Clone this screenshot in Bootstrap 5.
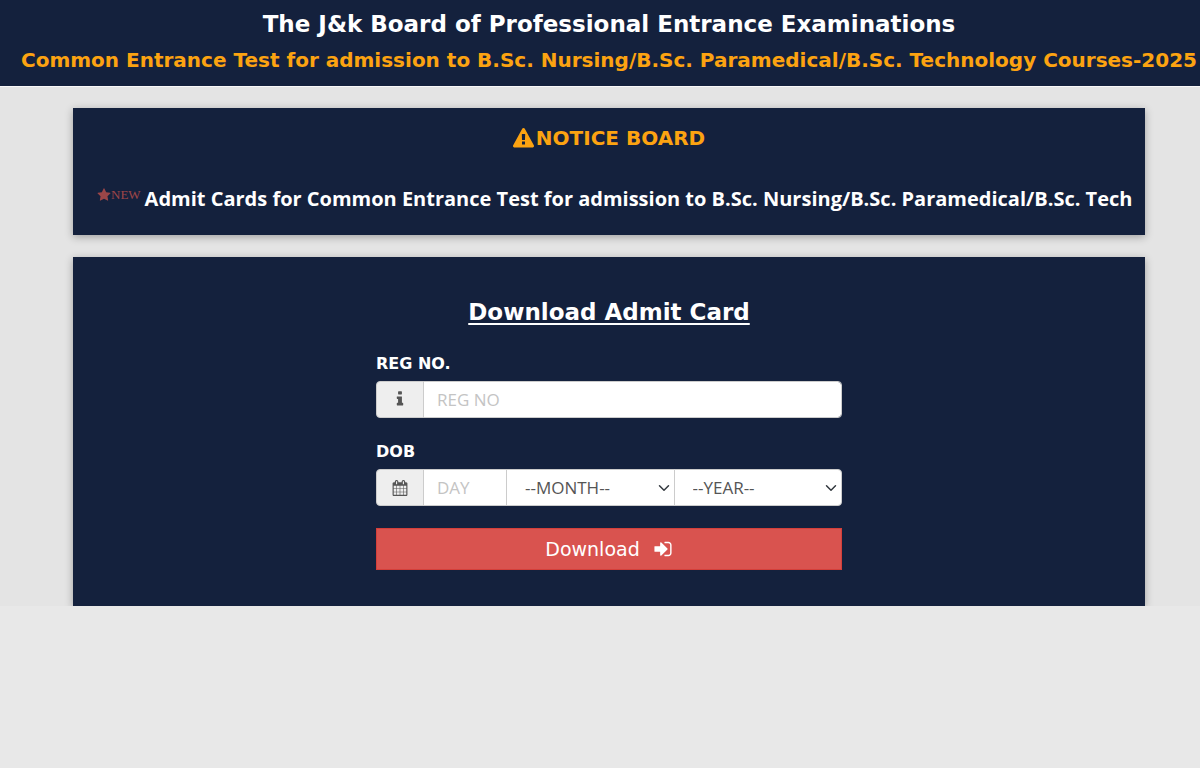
<!DOCTYPE html>
<html lang="en">
<head>
<meta charset="utf-8">
<meta name="viewport" content="width=device-width, initial-scale=1">
<title>Download Admit Card</title>
<link rel="stylesheet" href="https://cdn.jsdelivr.net/npm/bootstrap@5.3.0/dist/css/bootstrap.min.css">
<style>
:root { --navy: #14213d; --amber: #fca311; }
body { background: #e8e8e8; font-family: "DejaVu Sans", Verdana, sans-serif; }
.page { background: #e4e4e4; }
.masthead { background: var(--navy); border-bottom: 1px solid #f8f8f8; padding: 6px 0 8px 18px; line-height: 36px; }
.title-text { font-size: 23px; line-height: inherit; }
.sub-text { font-size: 20px; line-height: inherit; color: var(--amber); }
.content { padding: 21px 55px 0 73px; }
.panel { background: var(--navy); color: #fff; box-shadow: 0 2px 8px rgba(0,0,0,.3); }
.notice { padding: 18px 12px 22px; margin-bottom: 22px; }
.notice-title { font-size: 20px; line-height: 25px; color: var(--amber); margin-bottom: 34px; gap: 2px; }
.ticker { height: 28px; gap: 4px; margin-left: 12px; }
.ticker-text { font: 700 20px/28px "Open Sans", sans-serif; color: #fff; }
.new-tag { font: 13px/20px "Liberation Serif", serif; color: #e45a4f; opacity: .65; }
.download { padding: 40px 12px 36px; }
.form-title { font-size: 23px; line-height: 30px; margin-bottom: 24px; text-decoration: underline; text-decoration-thickness: 2px; text-underline-offset: 3px; }
.entry { max-width: 466px; }
.entry .form-label { font-size: 16px; line-height: 26px; font-weight: 700; margin-bottom: 4px; }
.entry .input-group { height: 37px; margin-bottom: 21px; }
.entry .input-group-text { width: 48px; background: #eee; border-color: #ccc; color: #555; border-radius: 4px; }
.entry .form-control, .entry .form-select { font: 17px/24px "Open Sans", sans-serif; color: #555; border-color: #ccc; border-radius: 4px; padding: 5px 13px; }
.entry .form-control::placeholder { color: #c4c4c4; }
.entry .form-select { padding-left: 18px; background-size: 12px 12px; background-position: right 4px center; }
.day-box { flex: 0 1 84px !important; }
.entry .btn { height: 42px; margin-top: 22px; padding: 0; font-size: 19px; gap: 13px; background: #d9534f; border: 1px solid #d43f3a; color: #fff; }
</style>
</head>
<body>
<div class="page overflow-hidden">
  <header class="masthead text-center text-white">
    <h1 class="title-text fw-bold m-0">The J&amp;k Board of Professional Entrance Examinations</h1>
    <h2 class="sub-text fw-bold m-0 text-nowrap">Common Entrance Test for admission to B.Sc. Nursing/B.Sc. Paramedical/B.Sc. Technology Courses-2025</h2>
  </header>
  <main class="content">
    <section class="panel notice">
      <h3 class="notice-title fw-bold d-flex justify-content-center align-items-center">
        <svg width="21" height="21" viewBox="0 0 1792 1792" fill="currentColor" aria-hidden="true"><path d="M1024 1375v-190q0-14-9.5-23.5t-22.5-9.5h-192q-13 0-22.5 9.5t-9.5 23.5v190q0 14 9.5 23.5t22.5 9.5h192q13 0 22.5-9.5t9.5-23.5zm-2-374l18-459q0-12-10-19-13-11-24-11h-220q-11 0-24 11-10 7-10 21l17 457q0 10 10 16.5t24 6.5h185q14 0 23.5-6.5t10.5-16.5zm-14-934l768 1408q35 63-2 126-17 29-46.5 46t-63.5 17h-1536q-34 0-63.5-17t-46.5-46q-37-63-2-126l768-1408q17-31 47-49t65-18 65 18 47 49z"/></svg>
        NOTICE BOARD
      </h3>
      <div class="ticker d-flex overflow-hidden text-nowrap">
        <span class="new-tag d-flex align-items-center align-self-start flex-shrink-0"><svg width="14" height="14" viewBox="0 0 1792 1792" fill="currentColor" aria-hidden="true"><path d="M1728 647q0 22-26 48l-363 354 86 500q1 7 1 20 0 21-10.5 35.5t-30.5 14.5q-19 0-40-12l-449-236-449 236q-22 12-40 12-21 0-31.5-14.5t-10.5-35.5q0-6 2-20l86-500-364-354q-25-27-25-48 0-37 56-46l502-73 225-455q19-41 49-41t49 41l225 455 502 73q56 9 56 46z"/></svg>NEW</span>
        <a class="ticker-text text-decoration-none" href="#">Admit Cards for Common Entrance Test for admission to B.Sc. Nursing/B.Sc. Paramedical/B.Sc. Tech</a>
      </div>
    </section>
    <section class="panel download">
      <h2 class="form-title fw-bold text-center">Download Admit Card</h2>
      <form class="entry mx-auto">
        <label class="form-label d-block" for="reg">REG NO.</label>
        <div class="input-group">
          <span class="input-group-text justify-content-center p-0"><svg width="18" height="18" viewBox="0 0 1792 1792" fill="currentColor" aria-hidden="true"><path d="M1216 1344v128q0 26-19 45t-45 19h-512q-26 0-45-19t-19-45v-128q0-26 19-45t45-19h64v-384h-64q-26 0-45-19t-19-45v-128q0-26 19-45t45-19h384q26 0 45 19t19 45v576h64q26 0 45 19t19 45zm-128-1152v192q0 26-19 45t-45 19h-256q-26 0-45-19t-19-45v-192q0-26 19-45t45-19h256q26 0 45 19t19 45z" transform="translate(0 -100)"/></svg></span>
          <input id="reg" class="form-control" type="text" placeholder="REG NO">
        </div>
        <label class="form-label d-block" for="day">DOB</label>
        <div class="input-group flex-nowrap mb-0">
          <span class="input-group-text justify-content-center p-0"><svg width="16" height="16" viewBox="0 0 1792 1792" fill="currentColor" aria-hidden="true"><path d="M192 1664h288v-288h-288v288zm352 0h320v-288h-320v288zm-352-352h288v-320h-288v320zm352 0h320v-320h-320v320zm-352-384h288v-288h-288v288zm736 736h320v-288h-320v288zm-384-736h320v-288h-320v288zm768 736h288v-288h-288v288zm-384-352h320v-320h-320v320zm-352-864v-288q0-13-9.5-22.5t-22.5-9.5h-64q-13 0-22.5 9.5t-9.5 22.5v288q0 13 9.5 22.5t22.5 9.5h64q13 0 22.5-9.5t9.5-22.5zm736 864h288v-320h-288v320zm-384-384h320v-288h-320v288zm384 0h288v-288h-288v288zm32-480v-288q0-13-9.5-22.5t-22.5-9.5h-64q-13 0-22.5 9.5t-9.5 22.5v288q0 13 9.5 22.5t22.5 9.5h64q13 0 22.5-9.5t9.5-22.5zm384-64v1280q0 52-38 90t-90 38h-1408q-52 0-90-38t-38-90v-1280q0-52 38-90t90-38h128v-96q0-66 47-113t113-47h64q66 0 113 47t47 113v96h384v-96q0-66 47-113t113-47h64q66 0 113 47t47 113v96h128q52 0 90 38t38 90z"/></svg></span>
          <input id="day" class="form-control day-box" type="text" placeholder="DAY">
          <select class="form-select" aria-label="Month"><option>--MONTH--</option></select>
          <select class="form-select" aria-label="Year"><option>--YEAR--</option></select>
        </div>
        <button class="btn w-100 rounded-0 d-flex justify-content-center align-items-center" type="submit">Download
          <svg width="20" height="20" viewBox="0 0 1792 1792" fill="currentColor" aria-hidden="true"><path d="M1312 896q0 26-19 45l-544 544q-19 19-45 19t-45-19-19-45v-288h-448q-26 0-45-19t-19-45v-384q0-26 19-45t45-19h448v-288q0-26 19-45t45-19 45 19l544 544q19 19 19 45zm352-352v704q0 119-84.5 203.5t-203.5 84.5h-320q-13 0-22.5-9.5t-9.5-22.5q0-4-1-20t-.5-26.5 3-23.5 10-19.5 20.5-6.5h320q66 0 113-47t47-113v-704q0-66-47-113t-113-47h-312l-11.5-1-11.5-3-8-5.5-7-9-2-13.5q0-4-1-20t-.5-26.5 3-23.5 10-19.5 20.5-6.5h320q119 0 203.5 84.5t84.5 203.5z"/></svg>
        </button>
      </form>
    </section>
  </main>
</div>
<script src="https://cdn.jsdelivr.net/npm/bootstrap@5.3.0/dist/js/bootstrap.bundle.min.js"></script>
</body>
</html>
